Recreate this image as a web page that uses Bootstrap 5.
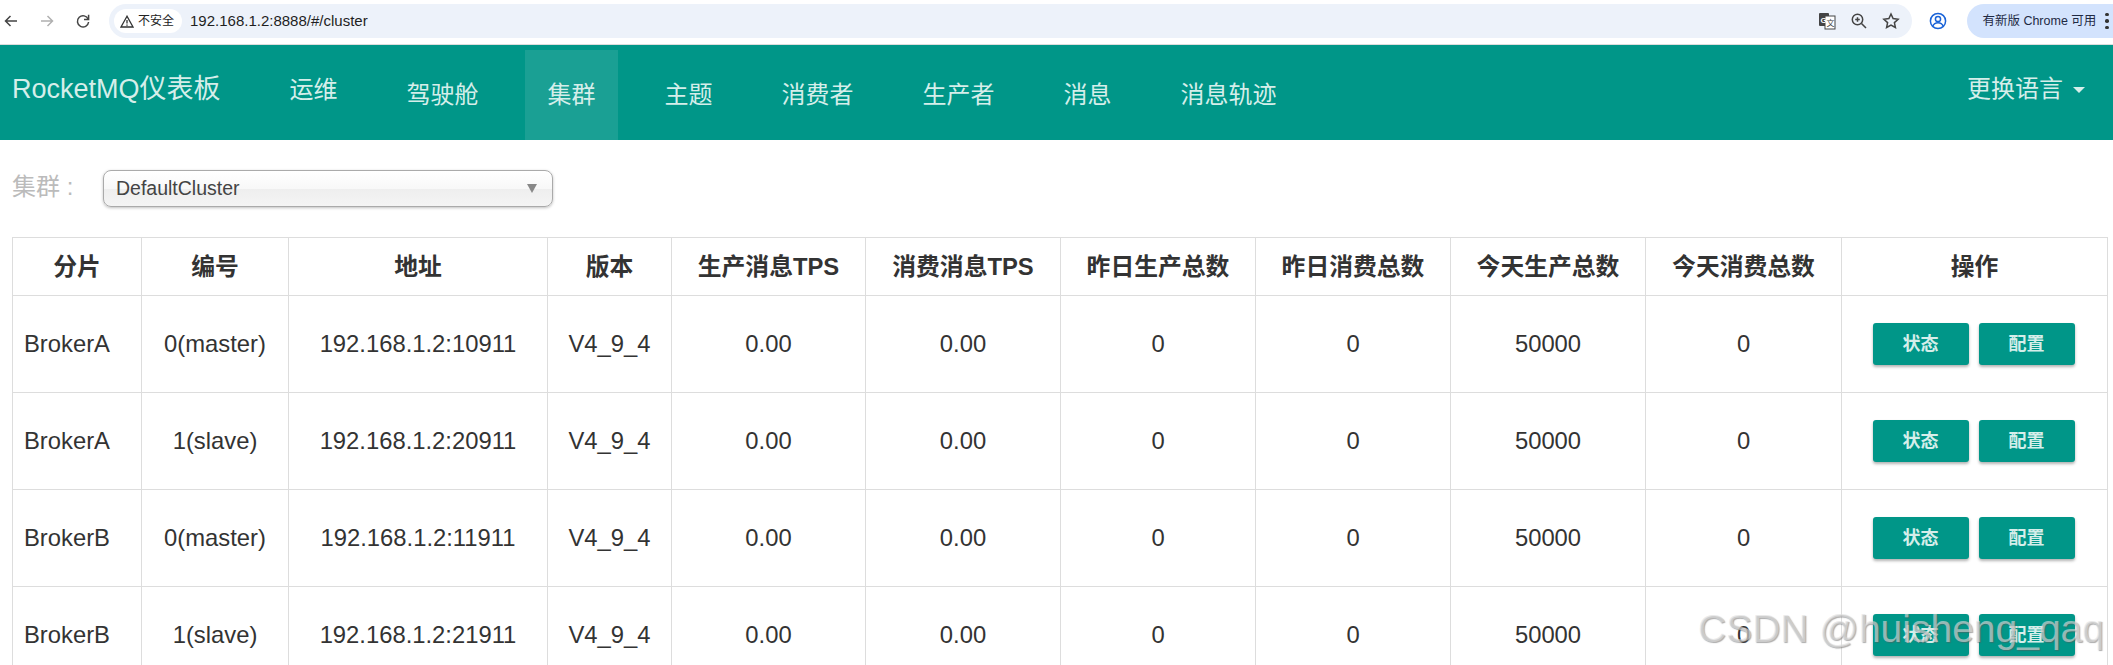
<!DOCTYPE html>
<html lang="zh-CN">
<head>
    <meta charset="UTF-8">
    <title>RocketMQ仪表板</title>
    <link href="https://cdn.jsdelivr.net/npm/bootstrap@5.3.0/dist/css/bootstrap.min.css" rel="stylesheet">
    <style>
        html, body { height: 665px; overflow: hidden; }
        body {
            font-family: "Liberation Sans", "Noto Sans CJK SC", sans-serif;
            color: #333;
            background: #fff;
            position: relative;
        }
        /* browser toolbar */
        .chrome-bar { height: 45px; padding: 4px 0 6px 0; border-bottom: 1px solid #dcdcdc; }
        .tool-btn { width: 36px; flex: 0 0 36px; display: flex; justify-content: center; }
        .tool-start { padding-left: 0; width: 109px; flex: 0 0 109px; margin-left: -7px; margin-right: 7px; }
        .omnibox { width: 1809px; height: 34px; background: #edf2fa; border-radius: 17px; padding: 0 12px 0 5px; }
        .sec-chip { width: 68px; height: 24px; background: #fff; border-radius: 12px; font-size: 12px; color: #222; padding-left: 6px; gap: 4px; }
        .url-text { font-size: 15px; color: #1f1f1f; margin-left: 8px; }
        .omni-icons { gap: 14px; margin-left: auto; }
        .update-pill { width: 146px; margin-left: 11px; height: 34px; background: #d3e3fd; border-radius: 17px 0 0 17px; font-size: 12.5px; color: #1f2a44; padding-left: 15px; white-space: nowrap; }
        .kebab { width: 4px; margin-left: 9px; gap: 3px; }
        .kebab i { display: block; width: 3.5px; height: 3.5px; background: #333; border-radius: 50%; }
        /* app navbar */
        .app-nav { background: #009688; height: 95px; padding: 0; align-items: stretch; flex-wrap: nowrap; }
        .app-brand { font-size: 27px; color: #d5eeea; margin: 0; padding: 26px 0 0 12px; width: 267px; line-height: 36px; }
        .app-links { gap: 24px; align-items: stretch; margin-top: 5px; }
        .app-nav .app-links .nav-link { font-size: 24px; line-height: 32px; color: #d5eeea; padding: 29px 22.5px 0 22.5px; height: 90px; }
        .app-nav .app-links .nav-link.active { background: rgba(255,255,255,.1); color: #d5eeea; }
        .app-nav .app-links .nav-link.raised { padding-top: 24px; }
        .lang-menu { margin-left: auto; font-size: 24px; line-height: 32px; color: #d5eeea; padding: 28px 28px 0 0; }
        .lang-caret { display: inline-block; margin-left: 10px; vertical-align: 4px; border-top: 6px solid #d5eeea; border-left: 6px solid transparent; border-right: 6px solid transparent; }
        /* cluster picker */
        .picker-row { height: 97px; padding: 30px 0 0 12px; }
        .picker-label { font-size: 24px; color: #bbb; width: 91px; line-height: 34px; }
        .picker-box {
            width: 450px; height: 37px; border: 1px solid #aaa; border-radius: 8px;
            background: linear-gradient(to bottom, #fff 0%, #f8f8f8 50%, #eee 50%, #f4f4f4 100%);
            box-shadow: 0 1px 3px rgba(0,0,0,.25);
            font-size: 19.5px; color: #444; padding: 0 15px 0 12px;
        }
        .picker-arrow { border-top: 9px solid #888; border-left: 5px solid transparent; border-right: 5px solid transparent; }
        /* broker table */
        .broker-wrap { margin-left: 12px; width: 2096px; }
        .broker-table { table-layout: fixed; width: 2096px; margin: 0; font-size: 23.8px; color: #333; --bs-table-border-color: #ddd; }
        .broker-table th, .broker-table td { text-align: center; vertical-align: middle; padding: 0 4px; color: #333; }
        .broker-table th { height: 58px; font-size: 23.8px; font-weight: 700; }
        .broker-table td { height: 97px; }
        .broker-table td:first-child { text-align: left; padding-left: 11px; }
        .w-a { width: 129px; } .w-b { width: 147px; } .w-c { width: 259px; } .w-d { width: 124px; }
        .w-e { width: 194px; } .w-f { width: 195px; } .w-g { width: 196px; } .w-h { width: 266px; }
        .act-row { gap: 10px; margin-left: -2px; }
        .act-btn {
            width: 96px; height: 42px; padding: 0; border: 0; border-radius: 3px; font-size: 18px; font-weight: 700;
            background: #009688; color: #d5eeea;
            box-shadow: 0 2px 3px rgba(0,0,0,.3);
        }
        .act-btn:hover { background: #009688; color: #d5eeea; }
        .csdn-mark {
            position: absolute; left: 1698px; top: 601px; font-size: 39px; line-height: 56px; white-space: nowrap;
            color: rgba(225,225,225,.6); text-shadow: 1px 1px 1px rgba(90,90,90,.5);
        }
    </style>
</head>
<body>
    <div class="chrome-bar d-flex align-items-center">
        <div class="tool-start d-flex align-items-center">
            <div class="tool-btn">
                <svg width="16" height="16" viewBox="0 0 16 16" fill="none" stroke="#444" stroke-width="1.5"><path d="M14 8H2.500M7.500 3 2.500 8l5 5"/></svg>
            </div>
            <div class="tool-btn">
                <svg width="16" height="16" viewBox="0 0 16 16" fill="none" stroke="#b0b0b0" stroke-width="1.5"><path d="M2 8h11.500M8.500 3l5 5-5 5"/></svg>
            </div>
            <div class="tool-btn">
                <svg width="16" height="16" viewBox="0 0 16 16" fill="none" stroke="#444" stroke-width="1.5"><path d="M13.200 6.200A5.600 5.600 0 1 0 13.600 9"/><path d="M13.600 1.800v4.600H9" /></svg>
            </div>
        </div>
        <div class="omnibox d-flex align-items-center">
            <div class="sec-chip d-flex align-items-center">
                <svg width="14" height="13" viewBox="0 0 14 13" fill="none" stroke="#333" stroke-width="1.3"><path d="M7 1.200 1 12h12zM7 5v3.600M7 9.600v1.200"/></svg>
                <span>不安全</span>
            </div>
            <span class="url-text">192.168.1.2:8888/#/cluster</span>
            <div class="omni-icons d-flex align-items-center">
                <svg width="18" height="18" viewBox="0 0 18 18">
                    <rect x="1" y="1" width="10" height="13" rx="1" fill="#444"/>
                    <rect x="7" y="4" width="10" height="13" fill="#fff" stroke="#444"/>
                    <text x="2.500" y="10.500" font-size="8" font-weight="700" fill="#fff" font-family="Liberation Sans">G</text>
                    <text x="8.500" y="14" font-size="8" fill="#444" font-family="Noto Sans CJK SC">文</text>
                </svg>
                <svg width="18" height="18" viewBox="0 0 18 18" fill="none" stroke="#444" stroke-width="1.5"><circle cx="7.500" cy="7.500" r="5.200"/><path d="M11.500 11.500 16 16M5.200 7.500h4.600M7.500 5.200v4.600"/></svg>
                <svg width="18" height="18" viewBox="0 0 18 18" fill="none" stroke="#444" stroke-width="1.5"><path d="M9 2l2.100 4.600 5 .6-3.700 3.400 1 4.900L9 13l-4.400 2.500 1-4.900L1.900 7.200l5-.6z"/></svg>
            </div>
        </div>
        <div class="tool-btn ms-2">
            <svg width="18" height="18" viewBox="0 0 18 18" fill="none" stroke="#1a63d8" stroke-width="1.5"><circle cx="9" cy="9" r="7.600"/><circle cx="9" cy="7" r="2.600"/><path d="M3.900 14c1-2.600 3-3.300 5.100-3.300s4.100.7 5.100 3.300"/></svg>
        </div>
        <div class="update-pill d-flex align-items-center">
            <span>有新版 Chrome 可用</span>
            <div class="kebab d-flex flex-column"><i></i><i></i><i></i></div>
        </div>
    </div>

    <nav class="navbar navbar-expand app-nav">
        <div class="app-brand">RocketMQ仪表板</div>
        <ul class="navbar-nav app-links">
            <li class="nav-item"><a class="nav-link raised" href="#">运维</a></li>
            <li class="nav-item"><a class="nav-link" href="#">驾驶舱</a></li>
            <li class="nav-item"><a class="nav-link active" href="#">集群</a></li>
            <li class="nav-item"><a class="nav-link" href="#">主题</a></li>
            <li class="nav-item"><a class="nav-link" href="#">消费者</a></li>
            <li class="nav-item"><a class="nav-link" href="#">生产者</a></li>
            <li class="nav-item"><a class="nav-link" href="#">消息</a></li>
            <li class="nav-item"><a class="nav-link" href="#">消息轨迹</a></li>
        </ul>
        <div class="lang-menu">更换语言<span class="lang-caret"></span></div>
    </nav>

    <div class="picker-row d-flex align-items-start">
        <div class="picker-label">集群 :</div>
        <div class="picker-box d-flex align-items-center justify-content-between">
            <span>DefaultCluster</span>
            <span class="picker-arrow"></span>
        </div>
    </div>

    <div class="broker-wrap">
        <table class="table table-bordered broker-table">
            <colgroup>
                <col class="w-a"><col class="w-b"><col class="w-c"><col class="w-d">
                <col class="w-e"><col class="w-f"><col class="w-f"><col class="w-f"><col class="w-f">
                <col class="w-g"><col class="w-h">
            </colgroup>
            <thead>
                <tr>
                    <th>分片</th><th>编号</th><th>地址</th><th>版本</th><th>生产消息TPS</th><th>消费消息TPS</th>
                    <th>昨日生产总数</th><th>昨日消费总数</th><th>今天生产总数</th><th>今天消费总数</th><th>操作</th>
                </tr>
            </thead>
            <tbody>
                <tr>
                    <td>BrokerA</td><td>0(master)</td><td>192.168.1.2:10911</td><td>V4_9_4</td><td>0.00</td><td>0.00</td><td>0</td><td>0</td><td>50000</td><td>0</td>
                    <td><div class="d-flex justify-content-center act-row"><button class="btn act-btn">状态</button><button class="btn act-btn">配置</button></div></td>
                </tr>
                <tr>
                    <td>BrokerA</td><td>1(slave)</td><td>192.168.1.2:20911</td><td>V4_9_4</td><td>0.00</td><td>0.00</td><td>0</td><td>0</td><td>50000</td><td>0</td>
                    <td><div class="d-flex justify-content-center act-row"><button class="btn act-btn">状态</button><button class="btn act-btn">配置</button></div></td>
                </tr>
                <tr>
                    <td>BrokerB</td><td>0(master)</td><td>192.168.1.2:11911</td><td>V4_9_4</td><td>0.00</td><td>0.00</td><td>0</td><td>0</td><td>50000</td><td>0</td>
                    <td><div class="d-flex justify-content-center act-row"><button class="btn act-btn">状态</button><button class="btn act-btn">配置</button></div></td>
                </tr>
                <tr>
                    <td>BrokerB</td><td>1(slave)</td><td>192.168.1.2:21911</td><td>V4_9_4</td><td>0.00</td><td>0.00</td><td>0</td><td>0</td><td>50000</td><td>0</td>
                    <td><div class="d-flex justify-content-center act-row"><button class="btn act-btn">状态</button><button class="btn act-btn">配置</button></div></td>
                </tr>
            </tbody>
        </table>
    </div>

    <div class="csdn-mark">CSDN @huisheng_qaq</div>

    <script src="https://cdn.jsdelivr.net/npm/bootstrap@5.3.0/dist/js/bootstrap.bundle.min.js"></script>
</body>
</html>
